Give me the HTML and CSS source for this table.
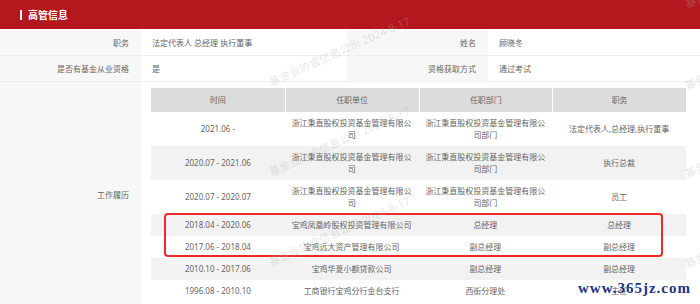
FILE: index.html
```html
<!DOCTYPE html>
<html lang="zh">
<head>
<meta charset="utf-8">
<title>高管信息</title>
<link rel="stylesheet" href="styles.css">
</head>
<body>
<div class="page">
  <div class="head"><span class="bar"></span><span class="title">高管信息</span></div>
  <div class="info">
    <div class="lab">职务</div>
    <div class="val">法定代表人 总经理 执行董事</div>
    <div class="lab">姓名</div>
    <div class="val">顾晓冬</div>
    <div class="lab">是否有基金从业资格</div>
    <div class="val">是</div>
    <div class="lab">资格获取方式</div>
    <div class="val">通过考试</div>
    <div class="lab lab-tall">工作履历</div>
    <div class="val val-wide">
      <div class="hist">
        <div class="hrow hhead"><div>时间</div><div>任职单位</div><div>任职部门</div><div>职务</div></div>
        <div class="hrow"><div>2021.06 -</div><div>浙江秉直股权投资基金管理有限公司</div><div>浙江秉直股权投资基金管理有限公司部门</div><div>法定代表人,总经理,执行董事</div></div>
        <div class="hrow"><div>2020.07 - 2021.06</div><div>浙江秉直股权投资基金管理有限公司</div><div>浙江秉直股权投资基金管理有限公司部门</div><div>执行总裁</div></div>
        <div class="hrow"><div>2020.07 - 2020.07</div><div>浙江秉直股权投资基金管理有限公司</div><div>浙江秉直股权投资基金管理有限公司部门</div><div>员工</div></div>
        <div class="hrow"><div>2018.04 - 2020.06</div><div>宝鸡凤凰岭股权投资管理有限公司</div><div>总经理</div><div>总经理</div></div>
        <div class="hrow"><div>2017.06 - 2018.04</div><div>宝鸡远大资产管理有限公司</div><div>副总经理</div><div>副总经理</div></div>
        <div class="hrow"><div>2010.10 - 2017.06</div><div>宝鸡华夏小额贷款公司</div><div>副总经理</div><div>副总经理</div></div>
        <div class="hrow"><div>1996.08 - 2010.10</div><div>工商银行宝鸡分行金台支行</div><div>西街分理处</div><div>主任</div></div>
      </div>
    </div>
  </div>

  <div class="mark-box"></div>

  <span class="wm wm1">基金业协会信息公示 2024-8-17</span>
  <span class="wm wm2">基金业协会信息公示 2024-8-17</span>
  <span class="wm wm3">基金业协会信息公示 2024-8-17</span>
  <span class="wm wm4">基金业协会信息公示 2024-8-17</span>
  <span class="wm wm5">基金业协会信息公示 2024-8-17</span>
  <span class="wm wm6">基金业协会信息公示 2024-8-17</span>
  <span class="wm wm7">基金业协会信息公示 2024-8-17</span>

  <span class="site">www.365jz.com</span>
</div>
</body>
</html>
```

FILE: styles.css
```css
* { box-sizing: border-box; }
html, body { margin: 0; padding: 0; background: #fff; }
body {
  font-family: "Noto Sans", "Noto Sans CJK SC", sans-serif;
  font-size: 8px;
  color: #666;
  overflow: hidden;
  height: 304px;
}
.page { position: relative; width: 700px; height: 304px; overflow: hidden; }

.head {
  height: 29px;
  margin-bottom: 1px;
  background: #b5171f;
  display: flex;
  align-items: center;
  padding-left: 20px;
}
.head .bar { width: 2px; height: 10px; background: #fff; margin-right: 6px; }
.head .title { color: #fff; font-size: 10px; font-weight: bold; line-height: 12px; }

.info {
  display: grid;
  grid-template-columns: 141px 206px 141px 212px;
}
.lab, .val {
  height: 26px;
  border-bottom: 1px solid #eee;
  display: flex;
  align-items: center;
  line-height: 12px;
}
.lab { background: #f7f7f7; justify-content: flex-end; padding-right: 12px; color: #666; }
.val { background: #fff; padding-left: 11px; color: #666; }
.lab-tall { height: auto; border-bottom: none; }
.val-wide { grid-column: 2 / 5; height: auto; border-bottom: none; display: block; padding: 6px 0 6px 10px; }

.hist { width: 535px; }
.hrow { display: grid; grid-template-columns: repeat(4, 1fr); }
.hrow > div {
  padding: 5px 6px;
  line-height: 12px;
  text-align: center;
  display: flex;
  align-items: center;
  justify-content: center;
  color: #666;
}
.hrow:nth-child(odd) { background: #f2f2f2; }
.hrow.hhead { background: #dcdcdc; }
.hrow.hhead > div { height: 24px; padding: 0; }
.hrow.hhead > div + div { border-left: 1px solid #fff; }

.mark-box {
  position: absolute;
  left: 164px; top: 213px;
  width: 499px; height: 44px;
  border: 2px solid #ec2a2a;
  border-radius: 4px;
}

.wm {
  position: absolute;
  font-size: 11px;
  line-height: 12px;
  white-space: nowrap;
  color: rgba(175, 175, 175, 0.32);
  transform: rotate(-24deg);
  transform-origin: 0 100%;
  pointer-events: none;
}
.wm1 { left: 272px; top: 76px; }
.wm2 { left: 272px; top: 166px; }
.wm3 { left: 272px; top: 256px; }
.wm4 { left: 688px; top: -2px; }
.wm5 { left: 688px; top: 80px; }
.wm6 { left: 688px; top: 168px; }
.wm7 { left: 688px; top: 258px; }

.site {
  position: absolute;
  left: 578px; top: 279px;
  font-family: "Liberation Serif", serif;
  font-weight: bold;
  font-size: 15px;
  letter-spacing: 1px;
  color: #1c3586;
  line-height: 18px;
}
```
